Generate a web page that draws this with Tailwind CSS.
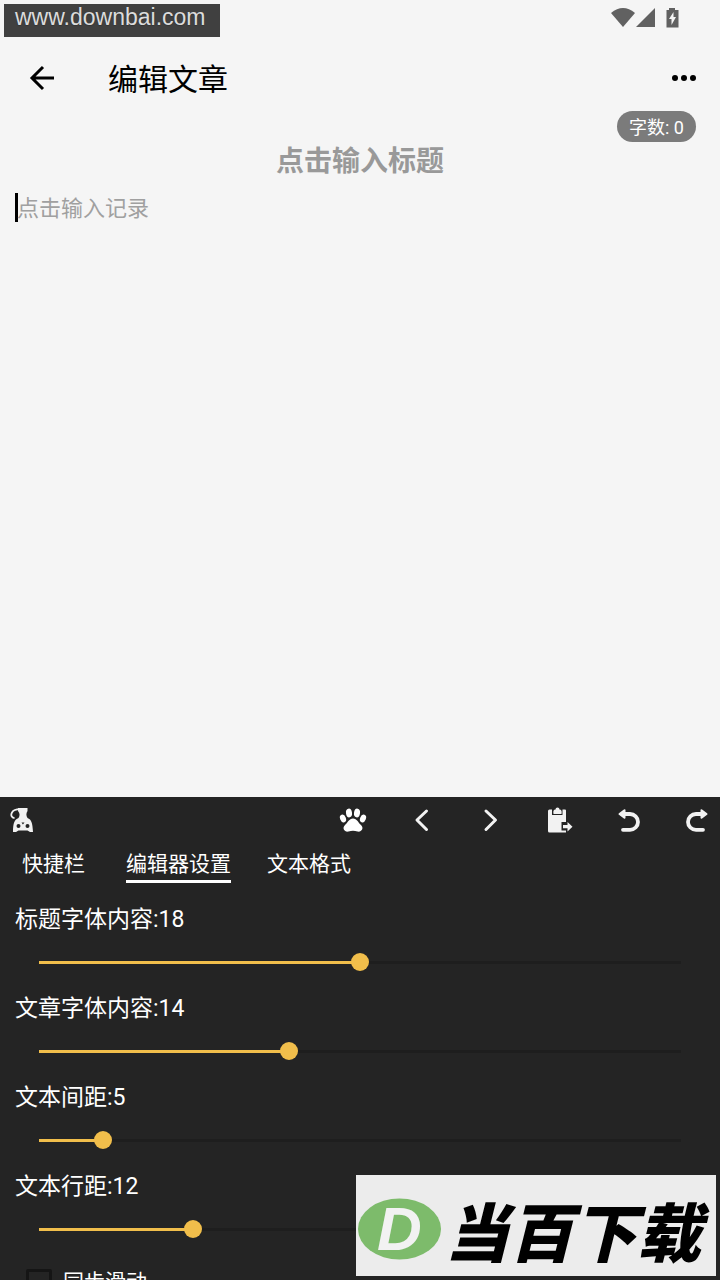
<!DOCTYPE html>
<html lang="zh-CN">
  <head>
    <meta charset="UTF-8">
    <meta name="viewport" content="width=device-width, initial-scale=1.0">
    <title>编辑文章</title>
    <script src="https://cdn.jsdelivr.net/npm/@tailwindcss/browser@4"></script>
  </head>
  <body class="relative flex h-screen flex-col overflow-hidden bg-[#f5f5f5] font-['Roboto','Noto_Sans_CJK_SC',sans-serif] text-black">
    <!-- status bar -->
    <div class="flex h-9 shrink-0 items-center justify-end pr-10 text-[#616161]">
      <svg class="h-5 w-6" viewBox="0 0 24 20" fill="currentColor"><path d="M0 5Q12-5 24 5L12 19z"/></svg>
      <svg class="ml-px h-5 w-5" viewBox="0 0 20 20" fill="currentColor"><path d="M19 0v19H0z"/></svg>
      <svg class="ml-2 h-5 w-4" viewBox="0 0 16 20" fill="currentColor"><path fill-rule="evenodd" d="M5 0h6v2h3.500v17.500h-12V2H5zM9.500 4L5 11h2.500v6L12 9H9.500z"/></svg>
    </div>

    <!-- app bar -->
    <header class="flex h-[84px] shrink-0 items-center px-6">
      <button type="button" aria-label="返回">
        <svg class="h-9 w-9" viewBox="0 0 36 36" fill="none" stroke="currentColor" stroke-width="3"><path d="M30 18H8M19 7L8 18l11 11"/></svg>
      </button>
      <h1 class="ml-12 pt-1 text-[30px] leading-9">编辑文章</h1>
      <button type="button" class="ml-auto" aria-label="更多">
        <svg class="h-6 w-6" viewBox="0 0 24 24" fill="currentColor"><circle cx="3" cy="12" r="3"/><circle cx="12" cy="12" r="3"/><circle cx="21" cy="12" r="3"/></svg>
      </button>
    </header>

    <!-- editor -->
    <main class="relative flex min-h-0 flex-1 flex-col pt-[21px]">
      <span class="absolute -top-[9px] right-6 h-[31px] rounded-full bg-[#7b7b7b] px-3 text-[18px] leading-[33px] text-white">字数: 0</span>
      <input type="text" aria-label="标题" placeholder="点击输入标题" class="h-[42px] w-full text-center text-[28px] font-bold outline-none placeholder:text-[#999]">
      <div class="flex flex-1 px-[15px] pt-[10px]">
        <span class="h-[29px] w-[3px] bg-black"></span>
        <textarea aria-label="记录" placeholder="点击输入记录" class="-ml-px flex-1 resize-none pt-px text-[22px] leading-[30px] outline-none placeholder:text-[#a0a0a0]"></textarea>
      </div>
    </main>

    <!-- tool panel -->
    <section class="h-[483px] shrink-0 overflow-hidden bg-[#242424] text-white">
      <div class="flex h-[46px] items-center pr-[10px] pl-[10px] text-[#f2f2f2]">
        <button type="button" aria-label="猫">
          <svg class="h-6 w-6" viewBox="0 0 24 24" fill="currentColor">
            <path d="M4.500 10C1.500 10 .500 7 2 4.500 3.500 2 6 1.200 10 1.200" fill="none" stroke="currentColor" stroke-width="1.800"/>
            <path fill-rule="evenodd" d="M8 0h9.500v3c-1.500 2-1.500 5 0 7 4 1.500 5 5 5.500 14h-3l-2.500-1.500h-9L6 24H3c0-9 1.500-12.500 5.500-14 1.500-2 1.500-5-.500-7zM8.500 16a2 2 0 1 0 0 4 2 2 0 0 0 0-4zm9 0a2 2 0 1 0 0 4 2 2 0 0 0 0-4zm-6-1.500l1.400 2 1.600-2z"/>
          </svg>
        </button>
        <div class="ml-auto flex gap-[45px]">
          <button type="button" aria-label="爪印">
            <svg class="h-6 w-6 overflow-visible text-white" viewBox="0 0 24 24" fill="currentColor">
              <ellipse cx="2" cy="10.500" rx="2.900" ry="4" transform="rotate(-22 2 10.500)"/>
              <ellipse cx="8" cy="5" rx="3" ry="4.400" transform="rotate(-8 8 5)"/>
              <ellipse cx="16" cy="5" rx="3" ry="4.400" transform="rotate(8 16 5)"/>
              <ellipse cx="22" cy="10.500" rx="2.900" ry="4" transform="rotate(22 22 10.500)"/>
              <path d="M12 10.500c4 0 5 4 8 6.500 3.500 3.500 0 7.500-3.500 6.500-3-1-6-1-9 0C4 24.500.500 20.500 4 17c3-2.500 4-6.500 8-6.500z"/>
            </svg>
          </button>
          <button type="button" aria-label="向左">
            <svg class="h-6 w-6" viewBox="0 0 24 24" fill="none" stroke="currentColor" stroke-width="3" stroke-linecap="round" stroke-linejoin="round"><path d="M16.500 3L7 12l9.500 9.500"/></svg>
          </button>
          <button type="button" aria-label="向右">
            <svg class="h-6 w-6" viewBox="0 0 24 24" fill="none" stroke="currentColor" stroke-width="3" stroke-linecap="round" stroke-linejoin="round"><path d="M7 3l9.500 9L7 21.500"/></svg>
          </button>
          <button type="button" aria-label="粘贴">
            <svg class="h-6 w-6 overflow-visible" viewBox="0 0 24 24" fill="currentColor">
              <path d="M1.500 1.500H4V7h10.500V1.500H17a1 1 0 0 1 1 1v11.500h-4.500v8.500H18v2H1.500a1.500 1.500 0 0 1-1.500-1.500V3a1.500 1.500 0 0 1 1.500-1.500z"/>
              <path d="M7.500 1.500a2 2 0 0 1 4 0c2 0 2.500 1.500 2 4.500h-8c-.500-3 0-4.500 2-4.500z"/>
              <path d="M15 17h4.500v-3l5 4.700-5 4.800v-3.200H15z"/>
            </svg>
          </button>
          <button type="button" aria-label="撤销">
            <svg class="h-6 w-6 overflow-visible" viewBox="0 0 24 24" fill="none" stroke="currentColor" stroke-width="3.800" stroke-linecap="round"><path d="M6 6h7a8 7.900 0 0 1 0 15.800H6"/><path d="M7.500 2.200v7.600L2.500 6z" fill="currentColor" stroke-width="2" stroke-linejoin="round"/></svg>
          </button>
          <button type="button" aria-label="重做">
            <svg class="h-6 w-6 overflow-visible" viewBox="0 0 24 24" fill="none" stroke="currentColor" stroke-width="3.800" stroke-linecap="round"><path d="M17 6h-7a8 7.900 0 0 0 0 15.800h7"/><path d="M15.500 2.200v7.600L20.500 6z" fill="currentColor" stroke-width="2" stroke-linejoin="round"/></svg>
          </button>
        </div>
      </div>

      <nav class="flex pl-[22px] text-[21px] leading-8">
        <button type="button" class="mr-[41px] h-10 border-b-3 border-transparent pt-1">快捷栏</button>
        <button type="button" class="mr-9 h-10 border-b-3 border-white pt-1">编辑器设置</button>
        <button type="button" class="h-10 border-b-3 border-transparent pt-1">文本格式</button>
      </nav>

      <div class="pt-[21px]">
        <div class="h-[89px]">
          <label for="titleSize" class="block px-[15px] text-[23px] leading-8">标题字体内容:18</label>
          <div class="mx-[30px] mt-[17px] grid items-center">
            <div class="col-start-1 row-start-1 mx-[9px] h-[3px] bg-[#1e1e1e]"><div class="h-full bg-[#f1be4b]" style="width: 50%"></div></div>
            <input id="titleSize" type="range" min="0" max="36" value="18" class="col-start-1 row-start-1 h-[18px] w-full appearance-none bg-transparent [&::-webkit-slider-thumb]:size-[18px] [&::-webkit-slider-thumb]:appearance-none [&::-webkit-slider-thumb]:rounded-full [&::-webkit-slider-thumb]:bg-[#f1be4b]">
          </div>
        </div>
        <div class="h-[89px]">
          <label for="textSize" class="block px-[15px] text-[23px] leading-8">文章字体内容:14</label>
          <div class="mx-[30px] mt-[17px] grid items-center">
            <div class="col-start-1 row-start-1 mx-[9px] h-[3px] bg-[#1e1e1e]"><div class="h-full bg-[#f1be4b]" style="width: 38.9%"></div></div>
            <input id="textSize" type="range" min="0" max="36" value="14" class="col-start-1 row-start-1 h-[18px] w-full appearance-none bg-transparent [&::-webkit-slider-thumb]:size-[18px] [&::-webkit-slider-thumb]:appearance-none [&::-webkit-slider-thumb]:rounded-full [&::-webkit-slider-thumb]:bg-[#f1be4b]">
          </div>
        </div>
        <div class="h-[89px]">
          <label for="spacing" class="block px-[15px] text-[23px] leading-8">文本间距:5</label>
          <div class="mx-[30px] mt-[17px] grid items-center">
            <div class="col-start-1 row-start-1 mx-[9px] h-[3px] bg-[#1e1e1e]"><div class="h-full bg-[#f1be4b]" style="width: 10%"></div></div>
            <input id="spacing" type="range" min="0" max="50" value="5" class="col-start-1 row-start-1 h-[18px] w-full appearance-none bg-transparent [&::-webkit-slider-thumb]:size-[18px] [&::-webkit-slider-thumb]:appearance-none [&::-webkit-slider-thumb]:rounded-full [&::-webkit-slider-thumb]:bg-[#f1be4b]">
          </div>
        </div>
        <div class="h-[89px]">
          <label for="lineGap" class="block px-[15px] text-[23px] leading-8">文本行距:12</label>
          <div class="mx-[30px] mt-[17px] grid items-center">
            <div class="col-start-1 row-start-1 mx-[9px] h-[3px] bg-[#1e1e1e]"><div class="h-full bg-[#f1be4b]" style="width: 24%"></div></div>
            <input id="lineGap" type="range" min="0" max="50" value="12" class="col-start-1 row-start-1 h-[18px] w-full appearance-none bg-transparent [&::-webkit-slider-thumb]:size-[18px] [&::-webkit-slider-thumb]:appearance-none [&::-webkit-slider-thumb]:rounded-full [&::-webkit-slider-thumb]:bg-[#f1be4b]">
          </div>
        </div>
        <label class="flex items-center gap-[11px] pt-[6px] pl-[26px] text-[21px] leading-8">
          <input type="checkbox" class="size-[26px] appearance-none rounded-xs border-3 border-[#151515]">
          同步滑动
        </label>
      </div>
    </section>

    <!-- site marks -->
    <div class="absolute top-1 left-1 h-[33px] w-[216px] bg-[#404040] pl-[11px] font-['Liberation_Sans',sans-serif] text-[23px] leading-[27px] text-[#dcdcdc] text-shadow-xs">www.downbai.com</div>
    <div class="absolute right-1 bottom-1 flex h-[101px] w-[360px] items-center bg-[#ececec] pt-[6px] pl-[2px]">
      <svg class="h-[62px] w-[83px] shrink-0" viewBox="0 0 83 62">
        <ellipse cx="41.500" cy="31" rx="41.500" ry="30.500" fill="#7dbb6b"/>
        <text x="19" y="52" fill="#f2f2f2" font-family="Liberation Sans, sans-serif" font-size="62" font-weight="bold" font-style="italic">D</text>
      </svg>
      <span class="ml-1 font-['Noto_Sans_CJK_SC',sans-serif] text-[64px] leading-[64px] font-black whitespace-nowrap italic">当百下载</span>
    </div>
  </body>
</html>
